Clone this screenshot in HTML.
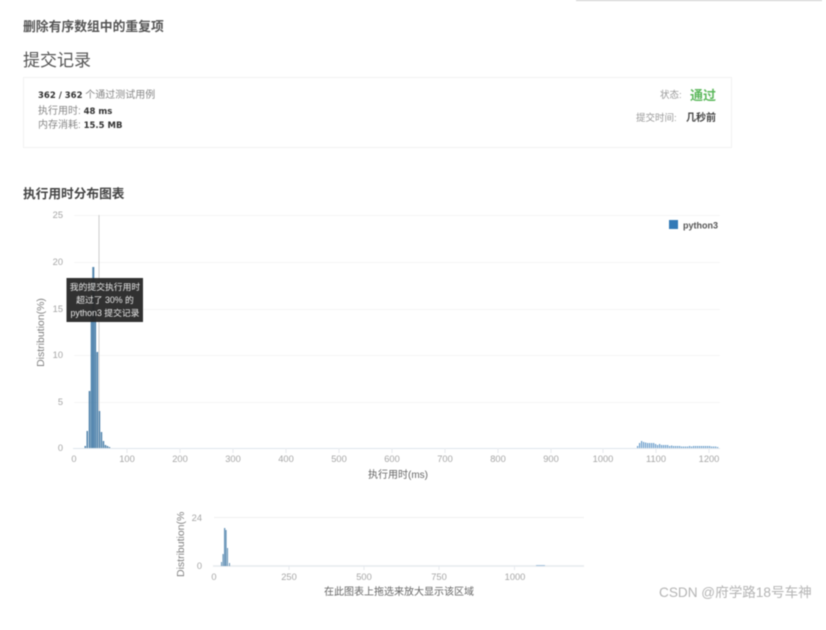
<!DOCTYPE html>
<html>
<head>
<meta charset="utf-8">
<style>
html,body{margin:0;padding:0;background:#fff;}
body{width:826px;height:630px;overflow:hidden;position:relative;font-family:"Liberation Sans","Noto Sans CJK SC",sans-serif;}
#wrap{position:absolute;left:0;top:0;width:826px;height:630px;filter:blur(0.45px);}
.t{position:absolute;white-space:nowrap;line-height:1;}
svg{position:absolute;left:0;top:0;}
svg text{font-family:"Liberation Sans","Noto Sans CJK SC",sans-serif;}
b{font-weight:bold;color:#333;font-family:"DejaVu Sans",sans-serif;font-size:8.5px;}
</style>
</head>
<body>
<div id="wrap">
<div style="position:absolute;left:576px;top:0;width:246px;height:1px;background:#ccc;"></div>
<div class="t" style="left:23px;top:21px;font-size:12.8px;font-weight:bold;color:#555;">删除有序数组中的重复项</div>
<div class="t" style="left:23px;top:52px;font-size:17px;color:#555;">提交记录</div>
<div style="position:absolute;left:23px;top:77px;width:707px;height:69px;border:1px solid #f2f2f2;"></div>
<div class="t" style="left:38px;top:91px;font-size:10px;color:#888;"><b>362 / 362</b> 个通过测试用例</div>
<div class="t" style="left:38px;top:107px;font-size:10px;color:#888;">执行用时: <b>48 ms</b></div>
<div class="t" style="left:38px;top:121px;font-size:10px;color:#888;">内存消耗: <b>15.5 MB</b></div>
<div class="t" style="left:660px;top:91px;font-size:9.5px;color:#999;">状态:</div>
<div class="t" style="left:690px;top:89px;font-size:13px;font-weight:bold;color:#5cb85c;">通过</div>
<div class="t" style="left:636px;top:114px;font-size:9.5px;color:#999;">提交时间:</div>
<div class="t" style="left:686px;top:114px;font-size:10px;font-weight:bold;color:#444;">几秒前</div>
<div class="t" style="left:23px;top:188px;font-size:12.7px;font-weight:bold;color:#444;">执行用时分布图表</div>

<svg width="826" height="630" viewBox="0 0 826 630">
<g stroke="#f6f6f6" stroke-width="1">
<line x1="74" x2="720" y1="215.5" y2="215.5"/>
<line x1="74" x2="720" y1="262.5" y2="262.5"/>
<line x1="74" x2="720" y1="309.5" y2="309.5"/>
<line x1="74" x2="720" y1="355.5" y2="355.5"/>
<line x1="74" x2="720" y1="402.5" y2="402.5"/>
</g>
<line x1="73" x2="720" y1="448.5" y2="448.5" stroke="#dfe6ec"/>
<g stroke="#e6eaee">
<line x1="127" x2="127" y1="448" y2="453"/><line x1="180" x2="180" y1="448" y2="453"/><line x1="233" x2="233" y1="448" y2="453"/><line x1="286" x2="286" y1="448" y2="453"/><line x1="339" x2="339" y1="448" y2="453"/><line x1="392" x2="392" y1="448" y2="453"/><line x1="445" x2="445" y1="448" y2="453"/><line x1="498" x2="498" y1="448" y2="453"/><line x1="551" x2="551" y1="448" y2="453"/><line x1="603" x2="603" y1="448" y2="453"/><line x1="656" x2="656" y1="448" y2="453"/><line x1="709" x2="709" y1="448" y2="453"/>
</g>
<line x1="99" x2="99" y1="215" y2="448" stroke="#ccc"/>
<g fill="#336f9f" opacity="0.85">
<rect x="84.5" y="446" width="1.5" height="2"/>
<rect x="86.5" y="431" width="1.5" height="17"/>
<rect x="88.7" y="391" width="1.7" height="57"/>
<rect x="90.7" y="310" width="1.7" height="138"/>
<rect x="92.3" y="267" width="2" height="181"/>
<rect x="94.4" y="310" width="1.7" height="138"/>
<rect x="96.4" y="352" width="1.7" height="96"/>
<rect x="98.7" y="411" width="1.5" height="37"/>
<rect x="100.7" y="432" width="1.5" height="16"/>
<rect x="102.7" y="441" width="1.5" height="7"/>
<rect x="104.7" y="445" width="1.5" height="3"/>
<rect x="106.7" y="446" width="1.5" height="2"/>
<rect x="108.7" y="447" width="1.5" height="1"/>
</g>
<g fill="#337ab7" opacity="0.75">
<path d="M637 446h1.200v2h-1.200zM639 443h1.200v5h-1.200zM641 441h1.200v7h-1.200zM643 442h1.200v6h-1.200zM645 442.500h1.200v5.500h-1.200zM647 443h1.200v5h-1.200zM649 443h1.200v5h-1.200zM651 443h1.200v5h-1.200zM653 443h1.200v5h-1.200zM655 444h1.200v4h-1.200zM657 445h1.200v3h-1.200zM659 444h1.200v4h-1.200zM661 445h1.200v3h-1.200zM663 445h1.200v3h-1.200zM665 445h1.200v3h-1.200zM667 445h1.200v3h-1.200zM669 446h1.200v2h-1.200zM671 445.500h1.200v2.500h-1.200zM673 446h1.200v2h-1.200zM675 446h1.200v2h-1.200zM677 446h1.200v2h-1.200zM679 446h1.200v2h-1.200zM681 446.500h1.200v1.500h-1.200zM683 446.500h1.200v1.500h-1.200zM685 446.500h1.200v1.500h-1.200zM687 446.500h1.200v1.500h-1.200zM689 446h1.200v2h-1.200zM691 446.500h1.200v1.500h-1.200zM693 446h1.200v2h-1.200zM695 446h1.200v2h-1.200zM697 446h1.200v2h-1.200zM699 446h1.200v2h-1.200zM701 446h1.200v2h-1.200zM703 446h1.200v2h-1.200zM705 446h1.200v2h-1.200zM707 446h1.200v2h-1.200zM709 446h1.200v2h-1.200zM711 446.500h1.200v1.500h-1.200zM713 446.500h1.200v1.500h-1.200zM715 446.500h1.200v1.500h-1.200zM717 447h1.200v1h-1.200z"/>
</g>
<g fill="#a5a5a5" font-size="9.300" text-anchor="end">
<text x="63" y="218">25</text>
<text x="63" y="265">20</text>
<text x="63" y="312">15</text>
<text x="63" y="358">10</text>
<text x="63" y="405">5</text>
<text x="63" y="451">0</text>
</g>
<g fill="#a5a5a5" font-size="9.300" text-anchor="middle">
<text x="74" y="462">0</text>
<text x="127" y="462">100</text>
<text x="180" y="462">200</text>
<text x="233" y="462">300</text>
<text x="286" y="462">400</text>
<text x="339" y="462">500</text>
<text x="392" y="462">600</text>
<text x="445" y="462">700</text>
<text x="498" y="462">800</text>
<text x="551" y="462">900</text>
<text x="603" y="462">1000</text>
<text x="656" y="462">1100</text>
<text x="709" y="462">1200</text>
</g>
<text x="398" y="478" fill="#666" font-size="10" text-anchor="middle">执行用时(ms)</text>
<text transform="translate(44,332.500) rotate(-90)" fill="#808080" font-size="10.500" text-anchor="middle">Distribution(%)</text>
<rect x="669" y="220" width="9" height="9" fill="#337ab7"/>
<text x="683" y="228.500" fill="#555" font-size="9" font-weight="bold">python3</text>
<rect x="66.500" y="278" width="76.500" height="44" fill="#262626" opacity="0.95"/>
<g fill="#e8e8e8" font-size="8.800" text-anchor="middle">
<text x="105" y="290">我的提交执行用时</text>
<text x="105" y="303">超过了 30% 的</text>
<text x="105" y="316">python3 提交记录</text>
</g>

<line x1="214" x2="584" y1="517.500" y2="517.500" stroke="#f0f0f0"/>
<line x1="213" x2="584" y1="566" y2="566" stroke="#e6eaee" stroke-width="1.500"/>
<g stroke="#e6eaee"><line x1="289" x2="289" y1="566" y2="570"/><line x1="364" x2="364" y1="566" y2="570"/><line x1="439" x2="439" y1="566" y2="570"/><line x1="514.500" x2="514.500" y1="566" y2="570"/></g>
<g fill="#336f9f" opacity="0.75">
<rect x="221" y="562" width="1" height="4"/>
<rect x="222.500" y="554" width="1.200" height="12"/>
<rect x="224" y="528" width="1.300" height="38"/>
<rect x="225.300" y="530" width="1.300" height="36"/>
<rect x="227" y="548" width="1" height="18"/>
<rect x="229" y="563" width="1" height="3"/>
<rect x="536" y="565" width="9" height="1" fill="#337ab7" opacity="0.5"/>
</g>
<g fill="#a5a5a5" font-size="9.300" text-anchor="end">
<text x="202" y="521">24</text>
<text x="202" y="569">0</text>
</g>
<g fill="#a5a5a5" font-size="9.300" text-anchor="middle">
<text x="214" y="580">0</text>
<text x="289" y="580">250</text>
<text x="364" y="580">500</text>
<text x="439" y="580">750</text>
<text x="515" y="580">1000</text>
</g>
<text x="399" y="595" fill="#666" font-size="10" text-anchor="middle">在此图表上拖选来放大显示该区域</text>
<text transform="translate(184,577) rotate(-90)" fill="#808080" font-size="10.500">Distribution(%</text>
</svg>
<div class="t" style="left:659px;top:586px;font-size:13.6px;color:#b4b4b4;">CSDN @府学路18号车神</div>
</div>
</body>
</html>
